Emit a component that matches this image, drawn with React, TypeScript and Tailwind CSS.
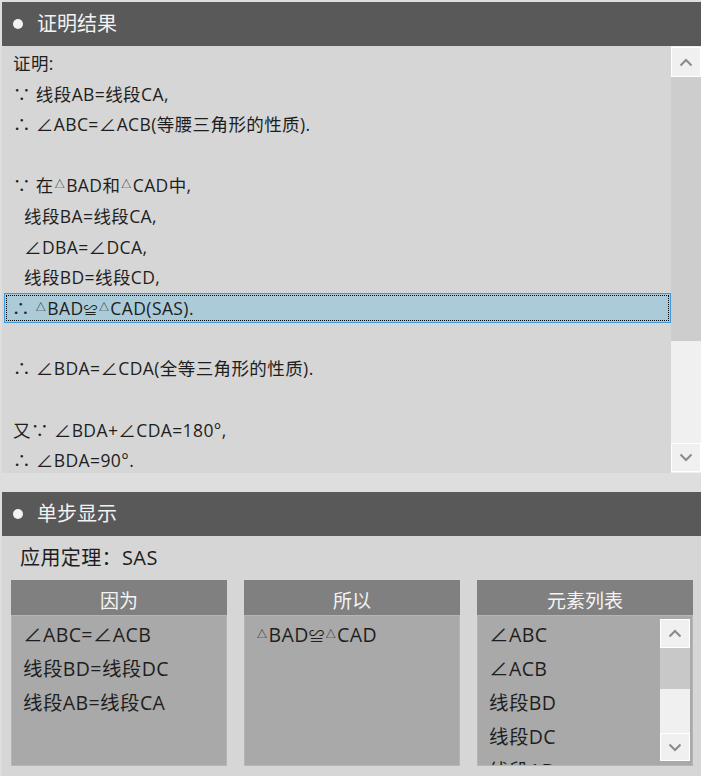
const FONT = { fontFamily: '"Segoe UI", "Open Sans", "Noto Sans CJK SC", sans-serif' };

function Chevron({ up }: { up?: boolean }) {
  return (
    <svg width="14" height="9" viewBox="0 0 14 9" fill="none">
      <path
        d={up ? "M1.5 7.5 L7 2 L12.5 7.5" : "M1.5 1.5 L7 7 L12.5 1.5"}
        stroke="#8a8a8a"
        strokeWidth="2"
      />
    </svg>
  );
}

// render △ small and raised, like the reference font does
function Txt({ s }: { s: string }) {
  const parts = s.split(/(△|≌)/);
  return (
    <>
      {parts.map((p, i) =>
        p === "△" ? (
          <span key={i} className="mx-[1px] align-[4px] text-[10px] leading-none">△</span>
        ) : p === "≌" ? (
          <span key={i} className="text-[0.8em]">≌</span>
        ) : (
          <span key={i}>{p}</span>
        )
      )}
    </>
  );
}

function Header({ title }: { title: string }) {
  return (
    <div className="flex h-[44px] items-center bg-[#595959] pl-[11px] text-[20px] text-[#f2f2f2]">
      <span className="mr-[14px] inline-block h-[10px] w-[10px] rounded-full bg-[#f2f2f2]" />
      {title}
    </div>
  );
}

const proof: { t: string; indent?: boolean; sel?: boolean }[] = [
  { t: "证明:" },
  { t: "∵ 线段AB=线段CA," },
  { t: "∴ ∠ABC=∠ACB(等腰三角形的性质)." },
  { t: "" },
  { t: "∵ 在△BAD和△CAD中," },
  { t: "线段BA=线段CA,", indent: true },
  { t: "∠DBA=∠DCA,", indent: true },
  { t: "线段BD=线段CD,", indent: true },
  { t: "∴ △BAD≌△CAD(SAS).", sel: true },
  { t: "" },
  { t: "∴ ∠BDA=∠CDA(全等三角形的性质)." },
  { t: "" },
  { t: "又∵ ∠BDA+∠CDA=180°," },
  { t: "∴ ∠BDA=90°." },
];

function Panel({ title, items, scroll }: { title: string; items: string[]; scroll?: boolean }) {
  return (
    <div className="flex w-[216px] flex-col">
      <div className="flex h-[35px] items-center justify-center bg-[#808080] pt-[7px] text-[19px] text-[#f4f4f4]">
        {title}
      </div>
      <div className="relative h-[151px] overflow-hidden border border-[#b5b5b5] bg-[#a9a9a9]">
        <div className="pl-[11px] pt-[2px] text-[19.5px] leading-[34px] tracking-[0.4px] text-[#1e1e1e]">
          {items.map((s, i) => (
            <div key={i} className="whitespace-nowrap"><Txt s={s} /></div>
          ))}
        </div>
        {scroll && (
          <div className="absolute right-[2px] top-[3px] flex h-[142px] w-[30px] flex-col bg-[#f0f0f0]">
            <div className="flex h-[29px] items-center justify-center border border-white">
              <Chevron up />
            </div>
            <div className="h-[41px] bg-[#c8c8c8]" />
            <div className="flex-1" />
            <div className="flex h-[28px] items-center justify-center border border-white">
              <Chevron />
            </div>
          </div>
        )}
      </div>
    </div>
  );
}

export default function App() {
  return (
    <div className="h-[776px] w-[701px] overflow-hidden bg-[#dedede] pl-[2px] pt-[2px]" style={FONT}>
      {/* 证明结果 */}
      <Header title="证明结果" />
      <div className="flex h-[427px] bg-[#d6d6d6]">
        <div className="flex-1 overflow-hidden pl-[2px] pt-[2px] text-[17.5px] leading-[30.6px] tracking-[0.4px] text-[#1e1e1e]">
          {proof.map((l, i) =>
            l.sel ? (
              <div key={i} className="h-[30px] border border-[#3a9be0] bg-[#abcbd9] p-[1px]">
                <div className="h-full whitespace-nowrap border border-dotted border-black pl-[5px] leading-[24px]">
                  <Txt s={l.t} />
                </div>
              </div>
            ) : (
              <div key={i} className={`h-[30.6px] whitespace-nowrap ${l.indent ? "pl-[20px]" : "pl-[9px]"}`}>
                <Txt s={l.t} />
              </div>
            )
          )}
        </div>
        <div className="flex w-[30px] flex-col bg-[#f0f0f0] pb-[1px] pt-[1px]">
          <div className="flex h-[30px] items-center justify-center border border-white">
            <Chevron up />
          </div>
          <div className="h-[264px] bg-[#cdcdcd]" />
          <div className="flex-1" />
          <div className="flex h-[29px] items-center justify-center border border-white">
            <Chevron />
          </div>
        </div>
      </div>

      <div className="h-[19px]" />

      {/* 单步显示 */}
      <Header title="单步显示" />
      <div className="h-[241px] bg-[#d6d6d6] pl-[9px]">
        <div className="h-[44px] pl-[9px] pt-[8px] text-[20px] leading-[28px] tracking-[0.4px] text-[#1e1e1e]">应用定理：SAS</div>
        <div className="flex gap-[17px]">
          <Panel title="因为" items={["∠ABC=∠ACB", "线段BD=线段DC", "线段AB=线段CA"]} />
          <Panel title="所以" items={["△BAD≌△CAD"]} />
          <Panel title="元素列表" items={["∠ABC", "∠ACB", "线段BD", "线段DC", "线段AB"]} scroll />
        </div>
      </div>
    </div>
  );
}
